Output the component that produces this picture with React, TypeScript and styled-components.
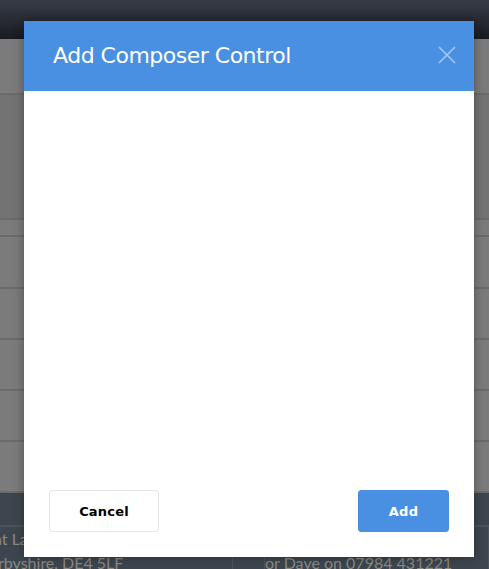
import React from "react";
import styled, { createGlobalStyle } from "styled-components";

const Global = createGlobalStyle`
  html, body { margin: 0; padding: 0; }
  body { width: 489px; height: 569px; overflow: hidden; background: #7b7b7b; font-family: "DejaVu Sans", Verdana, sans-serif; }
`;

const Page = styled.div`
  position: relative;
  width: 489px;
  height: 569px;
  display: flex;
  flex-direction: column;
  overflow: hidden;
`;

const TopBar = styled.div`
  height: 39px;
  flex: none;
  background: linear-gradient(#363c46, #181b20);
`;

const Row = styled.div<{ $h: number; $bg?: string }>`
  height: ${(p) => p.$h}px;
  flex: none;
  background: ${(p) => p.$bg || "#7b7b7b"};
  border-bottom: 2px solid #6b6b6b;
  box-sizing: border-box;
`;

const Footer = styled.div`
  flex: 1;
  background: #3d454e;
  display: flex;
  flex-direction: column;
`;

const FooterTop = styled.div`
  height: 32px;
  border-bottom: 2px solid #4b535c;
  flex: none;
`;

const FooterCols = styled.div`
  display: flex;
  flex: 1;
`;

const FooterCol = styled.div<{ $w?: number }>`
  ${(p) => (p.$w ? `width: ${p.$w}px; flex: none;` : "flex: 1;")}
  border-right: 1px solid #4b535c;
  font-family: Lato, "Open Sans", sans-serif;
  font-size: 16px;
  line-height: 24px;
  color: #8a8a82;
  white-space: nowrap;
  overflow: hidden;
  box-sizing: border-box;
`;

const FooterText = styled.div<{ $indent?: number }>`
  height: 24px;
  margin-left: ${(p) => p.$indent ?? 0}px;
`;

const Modal = styled.div`
  position: absolute;
  left: 24px;
  top: 21px;
  width: 450px;
  height: 536px;
  background: #fff;
  box-shadow: 0 0 10px rgba(0, 0, 0, 0.35);
  display: flex;
  flex-direction: column;
`;

const Header = styled.div`
  height: 70px;
  flex: none;
  background: #4a90e2;
  display: flex;
  align-items: center;
  justify-content: space-between;
  padding: 0 18px 0 29px;
`;

const Title = styled.h2`
  margin: 0;
  font-family: "DejaVu Sans", Verdana, sans-serif;
  font-weight: normal;
  font-size: 22px;
  letter-spacing: -0.5px;
  color: #fff;
  position: relative;
  top: -1px;
`;

const Close = styled.button`
  border: none;
  background: none;
  padding: 0;
  width: 18px;
  height: 18px;
  display: flex;
  cursor: pointer;
  position: relative;
  top: -1px;
`;

const Body = styled.div`
  flex: 1;
`;

const Footerbar = styled.div`
  display: flex;
  justify-content: space-between;
  padding: 0 25px 25px 25px;
`;

const Button = styled.button<{ $primary?: boolean }>`
  height: 42px;
  width: ${(p) => (p.$primary ? 91 : 110)}px;
  border-radius: 3px;
  border: 1px solid ${(p) => (p.$primary ? "#4a90e2" : "#e3e6ea")};
  background: ${(p) => (p.$primary ? "#4a90e2" : "#fff")};
  color: ${(p) => (p.$primary ? "#fff" : "#000")};
  font-family: "DejaVu Sans", Verdana, sans-serif;
  font-weight: bold;
  font-size: 13px;
  letter-spacing: 0.2px;
  padding: 0;
  cursor: pointer;
`;

export default function App() {
  return (
    <>
      <Global />
      <Page>
        <TopBar />
        <Row $h={56} />
        <Row $h={125} $bg="#737373" />
        <Row $h={17} />
        <Row $h={52} />
        <Row $h={51} />
        <Row $h={51} />
        <Row $h={51} />
        <Row $h={51} />
        <Footer>
          <FooterTop />
          <FooterCols>
            <FooterCol $w={233}>
              <FooterText $indent={-7}>nt Lane</FooterText>
              <FooterText $indent={-2}>rbyshire, DE4 5LF</FooterText>
            </FooterCol>
            <FooterCol $w={32} />
            <FooterCol>
              <FooterText />
              <FooterText>or Dave on 07984 431221</FooterText>
            </FooterCol>
          </FooterCols>
        </Footer>
        <Modal>
          <Header>
            <Title>Add Composer Control</Title>
            <Close aria-label="Close">
              <svg width="18" height="18" viewBox="0 0 18 18">
                <path d="M1 1L17 17M17 1L1 17" stroke="#a8c8f0" strokeWidth="1.6" />
              </svg>
            </Close>
          </Header>
          <Body />
          <Footerbar>
            <Button>Cancel</Button>
            <Button $primary>Add</Button>
          </Footerbar>
        </Modal>
      </Page>
    </>
  );
}
